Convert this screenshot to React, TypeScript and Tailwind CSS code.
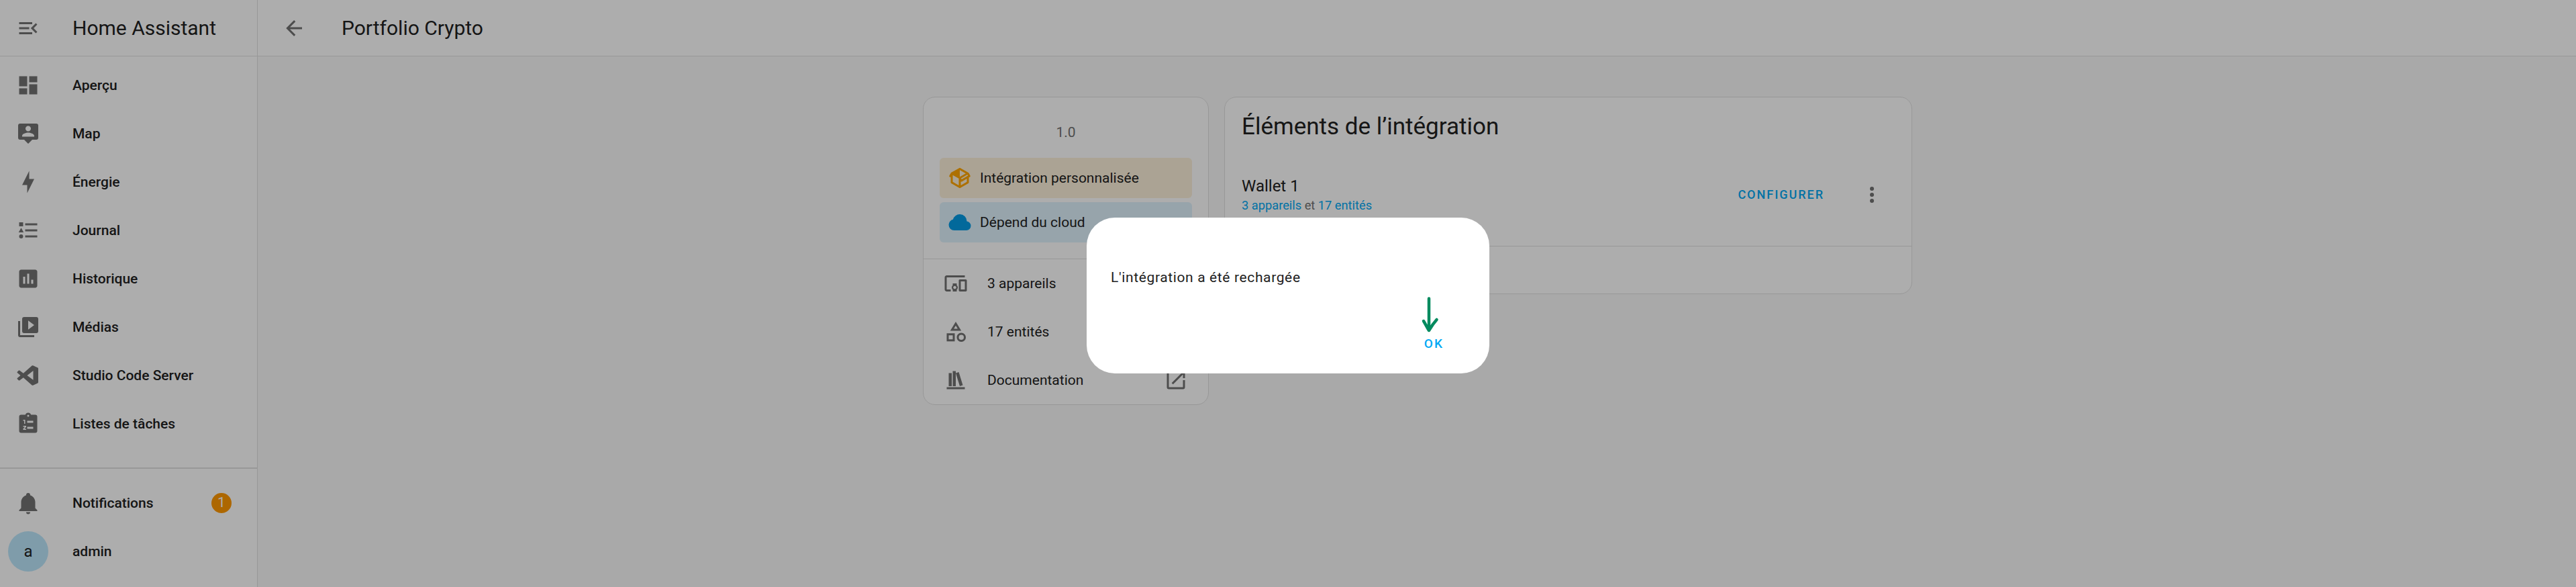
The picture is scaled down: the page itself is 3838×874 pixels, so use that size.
import React from 'react';

const paths = {
  menuOpen: 'M21,15.61L19.59,17L14.58,12L19.59,7L21,8.39L17.44,12L21,15.61M3,6H16V8H3V6M3,13V11H13V13H3M3,18V16H16V18H3Z',
  dashboard: 'M13,3V9H21V3M13,21H21V11H13M3,21H11V15H3M3,13H11V3H3V13Z',
  map: 'M4,2A2,2 0 0,0 2,4V16A2,2 0 0,0 4,18H8L12,22L16,18H20A2,2 0 0,0 22,16V4A2,2 0 0,0 20,2H4M12,4.3C13.5,4.3 14.7,5.5 14.7,7C14.7,8.5 13.5,9.7 12,9.7C10.5,9.7 9.3,8.5 9.3,7C9.3,5.5 10.5,4.3 12,4.3M18,15H6V14.1C6,12.1 10,11 12,11C14,11 18,12.1 18,14.1V15Z',
  bolt: 'M11 15H6L13 1V9H18L11 23V15Z',
  journal: 'M5,9.5L7.5,14H2.5L5,9.5M3,4H7V8H3V4M5,20A2,2 0 0,0 7,18A2,2 0 0,0 5,16A2,2 0 0,0 3,18A2,2 0 0,0 5,20M9,5V7H21V5H9M9,19H21V17H9V19M9,13H21V11H9V13Z',
  chart: 'M19 3H5C3.9 3 3 3.9 3 5V19C3 20.1 3.9 21 5 21H19C20.1 21 21 20.1 21 19V5C21 3.9 20.1 3 19 3ZM9 17H7V10H9V17M13 17H11V7H13V17M17 17H15V13H17V17',
  media: 'M4,6H2V20A2,2 0 0,0 4,22H18V20H4V6M20,2H8A2,2 0 0,0 6,4V16A2,2 0 0,0 8,18H20A2,2 0 0,0 22,16V4A2,2 0 0,0 20,2M12,14.5V5.5L18,10L12,14.5Z',
  code: 'M17,16.47V7.39L11,11.93L17,16.47ZM1.2,9.4C0.9,9.1 1,8.6 1.3,8.3L2.5,7.2C2.8,6.9 3.3,6.9 3.6,7.1L7.2,9.9L15.7,2.4C16,2.1 16.4,2.1 16.8,2.2L21.5,4.4C21.8,4.6 22,4.9 22,5.3V18.7C22,19.1 21.8,19.4 21.5,19.6L16.8,21.8C16.4,21.9 16,21.9 15.7,21.6L7.2,14.1L3.6,16.9C3.3,17.1 2.8,17.1 2.5,16.8L1.3,15.7C1,15.4 0.9,14.9 1.2,14.6L4.3,12L1.2,9.4Z',
  todo: 'M19,3H14.82C14.4,1.84 13.3,1 12,1C10.7,1 9.6,1.84 9.18,3H5A2,2 0 0,0 3,5V19A2,2 0 0,0 5,21H19A2,2 0 0,0 21,19V5A2,2 0 0,0 19,3ZM12,3A1,1 0 0,1 13,4A1,1 0 0,1 12,5A1,1 0 0,1 11,4A1,1 0 0,1 12,3ZM7,8H9V12H8V9H7V8ZM7,14H10V15L8.3,17H10V18H7V17L8.7,15H7V14ZM11,9H17V11H11V9ZM11,15H17V17H11V15Z',
  bell: 'M21,19V20H3V19L5,17V11C5,7.9 7.03,5.17 10,4.29C10,4.19 10,4.1 10,4A2,2 0 0,1 12,2A2,2 0 0,1 14,4C14,4.1 14,4.19 14,4.29C16.97,5.17 19,7.9 19,11V17L21,19M14,21A2,2 0 0,1 12,23A2,2 0 0,1 10,21',
  back: 'M20,11V13H8L13.5,18.5L12.08,19.92L4.16,12L12.08,4.08L13.5,5.5L8,11H20Z',
  pkg: 'M2,10.96C1.5,10.68 1.35,10.07 1.63,9.59L3.13,7C3.24,6.8 3.41,6.66 3.6,6.58L11.43,2.18C11.59,2.06 11.79,2 12,2C12.21,2 12.41,2.06 12.57,2.18L20.47,6.62C20.66,6.72 20.82,6.88 20.91,7.08L22.36,9.6C22.64,10.08 22.47,10.69 22,10.96L21,11.54V16.5C21,16.88 20.79,17.21 20.47,17.38L12.57,21.82C12.41,21.94 12.21,22 12,22C11.79,22 11.59,21.94 11.43,21.82L3.53,17.38C3.21,17.21 3,16.88 3,16.5V10.96C2.7,11.13 2.32,11.14 2,10.96M12,4.15V4.15L12,10.85V10.85L17.96,7.5L12,4.15M5,15.91L11,19.29V12.58L5,9.21V15.91M19,15.91V12.69L14,15.59C13.67,15.77 13.3,15.76 13,15.6V19.29L19,15.91M13.85,13.36L20.13,9.73L19.55,8.72L13.27,12.35L13.85,13.36Z',
  cloud: 'M6.5 20Q4.22 20 2.61 18.43 1 16.85 1 14.58 1 12.63 2.17 11.1 3.35 9.57 5.25 9.15 5.88 6.85 7.75 5.43 9.63 4 12 4 14.93 4 16.96 6.04 19 8.07 19 11 20.73 11.2 21.86 12.5 23 13.78 23 15.5 23 17.38 21.69 18.69 20.38 20 18.5 20Z',
  devices: 'M3 6H21V4H3C1.9 4 1 4.9 1 6V18C1 19.1 1.9 20 3 20H7V18H3V6M13 12H9V13.78C8.39 14.33 8 15.11 8 16C8 16.89 8.39 17.67 9 18.22V20H13V18.22C13.61 17.67 14 16.88 14 16S13.61 14.33 13 13.78V12M11 17.5C10.17 17.5 9.5 16.83 9.5 16S10.17 14.5 11 14.5 12.5 15.17 12.5 16 11.83 17.5 11 17.5M22 8H16C15.5 8 15 8.5 15 9V19C15 19.5 15.5 20 16 20H22C22.5 20 23 19.5 23 19V9C23 8.5 22.5 8 22 8M21 18H17V10H21V18Z',
  shapes: 'M11,13.5V21.5H3V13.5H11M9,15.5H5V19.5H9V15.5M12,2L17.5,11H6.5L12,2M12,5.86L10.08,9H13.92L12,5.86M17.5,13C20,13 22,15 22,17.5C22,20 20,22 17.5,22C15,22 13,20 13,17.5C13,15 15,13 17.5,13M17.5,15A2.5,2.5 0 0,0 15,17.5A2.5,2.5 0 0,0 17.5,20A2.5,2.5 0 0,0 20,17.5A2.5,2.5 0 0,0 17.5,15Z',
  books: 'M9 3V18H12V3H9M12 5L16 18L19 17L15 4L12 5M5 5V18H8V5H5M3 19V21H21V19H3Z',
  openNew: 'M14,3V5H17.59L7.76,14.83L9.17,16.24L19,6.41V10H21V3M19,19H5V5H12V3H5C3.89,3 3,3.9 3,5V19A2,2 0 0,0 5,21H19A2,2 0 0,0 21,19V12H19V19Z',
  dots: 'M12,16A2,2 0 0,1 14,18A2,2 0 0,1 12,20A2,2 0 0,1 10,18A2,2 0 0,1 12,16M12,10A2,2 0 0,1 14,12A2,2 0 0,1 12,14A2,2 0 0,1 10,12A2,2 0 0,1 12,10M12,4A2,2 0 0,1 14,6A2,2 0 0,1 12,8A2,2 0 0,1 10,6A2,2 0 0,1 12,4Z',
};

const Icon = ({ d, className = 'text-[#727272]' }: { d: string; className?: string }) => (
  <svg viewBox="0 0 24 24" className={`w-9 h-9 shrink-0 fill-current ${className}`}>
    <path d={d} fillRule="evenodd" />
  </svg>
);

const navItems = [
  { label: 'Aperçu', icon: paths.dashboard },
  { label: 'Map', icon: paths.map },
  { label: 'Énergie', icon: paths.bolt },
  { label: 'Journal', icon: paths.journal },
  { label: 'Historique', icon: paths.chart },
  { label: 'Médias', icon: paths.media },
  { label: 'Studio Code Server', icon: paths.code },
  { label: 'Listes de tâches', icon: paths.todo },
];

const NavRow = ({ left, label, right }: { left: React.ReactNode; label: string; right?: React.ReactNode }) => (
  <div className="h-[72px] flex items-center">
    <div className="w-[108px] shrink-0 pl-6">{left}</div>
    <span className="flex-1 pt-[2px] text-[21px] font-medium">{label}</span>
    {right}
  </div>
);

const Sidebar = () => (
  <aside className="w-[384px] shrink-0 h-full flex flex-col bg-white border-r border-[#e0e0e0]">
    <div className="h-[84px] shrink-0 flex items-center border-b border-[#e0e0e0]">
      <div className="w-[108px] shrink-0 pl-6">
        <Icon d={paths.menuOpen} />
      </div>
      <span className="text-[30px]">Home Assistant</span>
    </div>
    <nav className="pt-[7px] flex-1">
      {navItems.map((item) => (
        <NavRow key={item.label} left={<Icon d={item.icon} />} label={item.label} />
      ))}
    </nav>
    <div className="border-t-2 border-[#e0e0e0] pt-[15px] pb-[17px]">
      <NavRow
        left={<Icon d={paths.bell} />}
        label="Notifications"
        right={
          <span className="w-[30px] h-[30px] mr-[38px] rounded-full bg-[#ff9800] text-white text-[21px] flex items-center justify-center">
            1
          </span>
        }
      />
      <NavRow
        left={
          <div className="w-[60px] h-[60px] -ml-3 rounded-full bg-[#bbe6fb] flex items-center justify-center text-[24px]">
            a
          </div>
        }
        label="admin"
      />
    </div>
  </aside>
);

const InfoRow = ({ d, label, right }: { d: string; label: string; right?: React.ReactNode }) => (
  <div className="h-[72px] flex items-center pl-[30px] pr-[30px]">
    <Icon d={d} />
    <span className="ml-[29px] flex-1 pt-[2px] text-[21px]">{label}</span>
    {right}
  </div>
);

const Alert = ({ d, iconClass, bg, label }: { d: string; iconClass: string; bg: string; label: string }) => (
  <div className={`h-[60px] flex items-center gap-3 px-3 rounded-md ${bg}`}>
    <Icon d={d} className={iconClass} />
    <span className="pt-[1px] text-[21px]">{label}</span>
  </div>
);

const InfoCard = () => (
  <section className="w-[426px] h-[459px] bg-white border border-[#e0e0e0] rounded-[18px] flex flex-col">
    <div className="h-[90px] pt-[38px] text-center text-[21px] leading-[28px] text-[#727272]">1.0</div>
    <div className="px-6 flex flex-col gap-1.5">
      <Alert d={paths.pkg} iconClass="text-[#ffa600]" bg="bg-[#fdf0da]" label="Intégration personnalisée" />
      <Alert d={paths.cloud} iconClass="text-[#039be5]" bg="bg-[#dff2fd]" label="Dépend du cloud" />
    </div>
    <div className="mt-6 border-t border-[#e0e0e0]">
      <InfoRow d={paths.devices} label="3 appareils" />
      <InfoRow d={paths.shapes} label="17 entités" />
      <InfoRow d={paths.books} label="Documentation" right={<Icon d={paths.openNew} />} />
    </div>
  </section>
);

const EntriesCard = () => (
  <section className="w-[1025px] h-[294px] bg-white border border-[#e0e0e0] rounded-[18px] flex flex-col">
    <h2 className="h-[70px] shrink-0 pt-[16px] pl-[25px] text-[35px] leading-[56px]">Éléments de l’intégration</h2>
    <div className="h-[152px] shrink-0 pb-[2px] flex items-center pl-[25px] pr-[41px] border-b border-[#e0e0e0]">
      <div className="flex-1">
        <div className="pt-[2px] text-[24px] leading-[30px]">Wallet 1</div>
        <div className="text-[18.25px] leading-[28px] text-[#727272]">
          <span className="text-[#03a9f4]">3 appareils</span> et <span className="text-[#03a9f4]">17 entités</span>
        </div>
      </div>
      <span className="text-[18px] font-medium tracking-[0.11em] text-[#03a9f4] mr-[53px]">CONFIGURER</span>
      <Icon d={paths.dots} />
    </div>
  </section>
);

const ReloadDialog = () => (
  <div className="fixed inset-0 bg-black/32 flex items-center justify-center pt-[6px]">
    <div className="relative w-[600px] h-[232px] bg-white rounded-[42px] flex flex-col justify-between pl-[36px] pr-[68px] pt-[74px] pb-[33px]">
      <p className="text-[21px] leading-[30px] tracking-[0.03em]">L'intégration a été rechargée</p>
      <span className="self-end text-[19px] leading-[22px] font-medium tracking-[0.11em] text-[#03a9f4]">OK</span>
      {/* hand drawn arrow pointing at the button */}
      <svg viewBox="0 0 30 60" className="absolute left-[498px] top-[116px] w-[30px] h-[60px] fill-none stroke-[#008a5e]">
        <path d="M12 4.5V52M4 38C7 43 10 49 12 52C15 47 19 41 23.5 36" strokeWidth="4.5" strokeLinecap="round" strokeLinejoin="round" />
      </svg>
    </div>
  </div>
);

const App = () => (
  <div className="relative w-full h-screen flex overflow-hidden bg-[#fafafa] text-[#212121] font-['Roboto',sans-serif]">
    <Sidebar />
    <main className="flex-1 h-full flex flex-col">
      <header className="h-[84px] shrink-0 flex items-center border-b border-[#e0e0e0] bg-white">
        <div className="w-[125px] shrink-0 pl-9">
          <Icon d={paths.back} />
        </div>
        <h1 className="text-[30px]">Portfolio Crypto</h1>
      </header>
      <div className="flex justify-center items-start gap-[23px] pt-[60px] pl-[2px]">
        <InfoCard />
        <EntriesCard />
      </div>
    </main>
    <ReloadDialog />
  </div>
);

export default App;
